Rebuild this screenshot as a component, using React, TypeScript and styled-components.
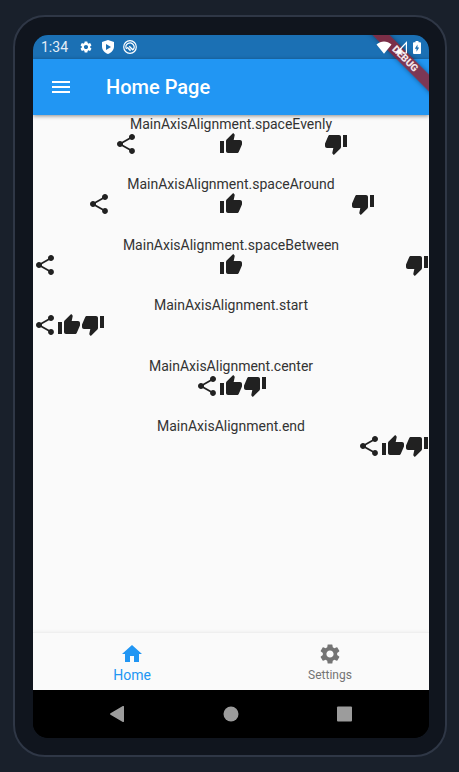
import React from "react";
import styled, { createGlobalStyle } from "styled-components";
import { MdHome, MdMenu, MdSettings, MdShare, MdThumbDown, MdThumbUp } from "react-icons/md";

const GlobalStyle = createGlobalStyle`
  *, *::before, *::after { box-sizing: border-box; }
  body {
    margin: 0;
    background: #19202b;
    font-family: Roboto, "Liberation Sans", sans-serif;
  }
`;

const Stage = styled.div`
  min-height: 100vh;
  padding: 15px 12px 15px 13px;
  display: flex;
`;

const Phone = styled.div`
  flex: 1;
  display: flex;
  padding: 18px 16px 17px 18px;
  border: 2px solid #2f3746;
  border-radius: 32px;
  background: #10151e;
`;

const Screen = styled.div`
  position: relative;
  flex: 1;
  min-width: 0;
  display: flex;
  flex-direction: column;
  overflow: hidden;
  border-radius: 15px;
  background: #000;
`;

const StatusBar = styled.div`
  height: 24px;
  padding: 0 8px;
  display: flex;
  align-items: center;
  justify-content: space-between;
  background: #1b70b4;
  color: #fff;
`;

const StatusGroup = styled.div<{ $gap: number }>`
  position: relative;
  z-index: 2;
  display: flex;
  align-items: center;
  gap: ${(p) => p.$gap}px;
`;

const Clock = styled.time`
  font-size: 14px;
  line-height: 24px;
  color: #e4eef7;
  margin-right: 2px;
`;

const DebugRibbon = styled.div`
  position: absolute;
  z-index: 1;
  top: 18px;
  right: -26px;
  width: 100px;
  transform: rotate(45deg);
  background: rgba(150, 28, 40, 0.78);
  box-shadow: 0 0 5px rgba(0, 0, 0, 0.4);
  color: #f3e6ea;
  font-size: 10px;
  font-weight: 900;
  line-height: 12px;
  text-align: center;
  pointer-events: none;
`;

const AppBar = styled.header`
  position: relative;
  height: 56px;
  padding: 0 16px;
  display: flex;
  align-items: center;
  gap: 33px;
  background: #2196f3;
  box-shadow: 0 1px 4px rgba(0, 0, 0, 0.45);
  color: #fff;
`;

const MenuButton = styled.button`
  display: flex;
  padding: 0;
  border: 0;
  background: none;
  color: inherit;
`;

const Title = styled.h1`
  margin: 0;
  font-size: 20px;
  line-height: 24px;
  font-weight: 500;
`;

const Samples = styled.main`
  flex: 1;
  background: #fafafa;
`;

const SampleList = styled.div`
  min-height: 343px;
  display: flex;
  flex-direction: column;
  justify-content: space-between;
`;

const SampleLabel = styled.div`
  padding-top: 1px;
  font-size: 14px;
  line-height: 16px;
  text-align: center;
  color: #333;
`;

const IconRow = styled.div<{ $justify: string }>`
  display: flex;
  justify-content: ${(p) => p.$justify};
  color: #212121;
`;

const TabBar = styled.nav`
  display: flex;
  height: 58px;
  border-top: 1px solid #efefef;
  background: #fafafa;
  box-shadow: 0 -1px 3px rgba(0, 0, 0, 0.04);
`;

const Tab = styled.button<{ $active?: boolean }>`
  flex: 1;
  display: flex;
  flex-direction: column;
  align-items: center;
  justify-content: center;
  padding: 2px 0 0;
  border: 0;
  background: none;
  font-family: inherit;
  font-size: ${(p) => (p.$active ? 14 : 12)}px;
  line-height: 18px;
  color: ${(p) => (p.$active ? "#2196f3" : "#747474")};
`;

const SystemNav = styled.nav`
  display: flex;
  justify-content: center;
  align-items: center;
  gap: 90px;
  height: 48px;
  background: #000;
`;

const SystemButton = styled.button`
  display: flex;
  padding: 0;
  border: 0;
  background: none;
  color: #9c9c9c;
`;

const ShieldIcon = () => (
  <svg width="12" height="14" viewBox="0 0 12 14" fill="currentColor" aria-hidden="true">
    <path fillRule="evenodd" d="M6 0 12 2v4.500c0 3.500-2.500 6.300-6 7.500C2.500 12.800 0 10 0 6.500V2ZM4 4v6l5-3Z" />
  </svg>
);

const CircleIcon = () => (
  <svg width="14" height="14" viewBox="0 0 14 14" fill="none" stroke="currentColor" aria-hidden="true">
    <circle cx="7" cy="7" r="6.300" strokeWidth="1.200" />
    <path d="M3.600 9A4 4 0 1 1 9.500 10.100" strokeWidth="1.200" />
    <path d="M4.200 7.200 7.600 10.600M6.200 6.200 10 10" strokeWidth="1.500" />
  </svg>
);

const WifiIcon = () => (
  <svg width="16" height="13" viewBox="0 0 16 13" fill="currentColor" aria-hidden="true">
    <path d="M0.500 3.600C5 -0.400 11 -0.400 15.500 3.600L8 12.700Z" />
  </svg>
);

const SignalIcon = () => (
  <svg width="15" height="13" viewBox="0 0 15 13" aria-hidden="true">
    <path d="M11.400 1.500V12H1.500Z" fill="none" stroke="currentColor" strokeWidth="1.200" />
    <path d="M0 12.500 6.500 6.500V12.500Z" fill="currentColor" />
  </svg>
);

const BatteryIcon = () => (
  <svg width="8" height="13" viewBox="0 0 8 13" fill="currentColor" aria-hidden="true">
    <path fillRule="evenodd" d="M2.500 0h3v1.300H7a1 1 0 0 1 1 1V12a1 1 0 0 1-1 1H1a1 1 0 0 1-1-1V2.300a1 1 0 0 1 1-1h1.500ZM4.500 3.500 1.800 7.800h1.700v3L6.200 6.500H4.500Z" />
  </svg>
);

const samples = [
  { name: "spaceEvenly", justify: "space-evenly" },
  { name: "spaceAround", justify: "space-around" },
  { name: "spaceBetween", justify: "space-between" },
  { name: "start", justify: "flex-start" },
  { name: "center", justify: "center" },
  { name: "end", justify: "flex-end" },
];

export default function App() {
  return (
    <>
      <GlobalStyle />
      <Stage>
        <Phone>
          <Screen>
            <StatusBar>
              <StatusGroup $gap={9}>
                <Clock>1:34</Clock>
                <MdSettings size={14} />
                <ShieldIcon />
                <CircleIcon />
              </StatusGroup>
              <StatusGroup $gap={3}>
                <WifiIcon />
                <SignalIcon />
                <BatteryIcon />
              </StatusGroup>
            </StatusBar>
            <DebugRibbon>DEBUG</DebugRibbon>
            <AppBar>
              <MenuButton aria-label="Open menu">
                <MdMenu size={24} />
              </MenuButton>
              <Title>Home Page</Title>
            </AppBar>
            <Samples>
              <SampleList>
                {samples.map((s) => (
                  <section key={s.name}>
                    <SampleLabel>MainAxisAlignment.{s.name}</SampleLabel>
                    <IconRow $justify={s.justify}>
                      <MdShare size={24} />
                      <MdThumbUp size={24} />
                      <MdThumbDown size={24} />
                    </IconRow>
                  </section>
                ))}
              </SampleList>
            </Samples>
            <TabBar>
              <Tab $active aria-current="page">
                <MdHome size={24} />
                Home
              </Tab>
              <Tab>
                <MdSettings size={24} />
                Settings
              </Tab>
            </TabBar>
            <SystemNav>
              <SystemButton aria-label="Back">
                <svg width="24" height="18" viewBox="0 0 24 18" fill="currentColor">
                  <path d="M19 1.800V16.200a.8.8 0 0 1-1.200.7L5.500 9.700a.8.8 0 0 1 0-1.400L17.800 1.100a.8.8 0 0 1 1.200.7Z" />
                </svg>
              </SystemButton>
              <SystemButton aria-label="Home screen">
                <svg width="24" height="18" viewBox="0 0 24 18" fill="currentColor">
                  <circle cx="12" cy="9" r="7.500" />
                </svg>
              </SystemButton>
              <SystemButton aria-label="Recent apps">
                <svg width="24" height="18" viewBox="0 0 24 18" fill="currentColor">
                  <rect x="4" y="1.500" width="15" height="15" rx="1" />
                </svg>
              </SystemButton>
            </SystemNav>
          </Screen>
        </Phone>
      </Stage>
    </>
  );
}
